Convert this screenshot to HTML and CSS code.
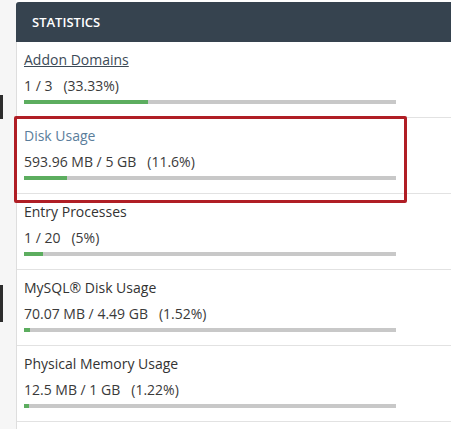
FILE: index.html
```html
<!DOCTYPE html>
<html>
<head>
<meta charset="utf-8">
<link rel="stylesheet" href="styles.css">
</head>
<body>
<div class="page">
  <div class="gutter">
    <span class="mark mark-a"></span>
    <span class="mark mark-b"></span>
  </div>
  <div class="panel">
    <div class="panel-head">STATISTICS</div>
    <div class="stat">
      <a class="stat-title link" href="#">Addon Domains</a>
      <div class="stat-value"><span>1 / 3</span><span class="pct">(33.33%)</span></div>
      <div class="bar"><div class="fill" style="width:33.33%"></div></div>
    </div>
    <div class="stat highlighted">
      <div class="stat-title blue">Disk Usage</div>
      <div class="stat-value"><span>593.96 MB / 5 GB</span><span class="pct">(11.6%)</span></div>
      <div class="bar"><div class="fill" style="width:11.6%"></div></div>
    </div>
    <div class="stat">
      <div class="stat-title">Entry Processes</div>
      <div class="stat-value"><span>1 / 20</span><span class="pct">(5%)</span></div>
      <div class="bar"><div class="fill" style="width:5%"></div></div>
    </div>
    <div class="stat">
      <div class="stat-title">MySQL® Disk Usage</div>
      <div class="stat-value"><span>70.07 MB / 4.49 GB</span><span class="pct">(1.52%)</span></div>
      <div class="bar"><div class="fill" style="width:1.52%"></div></div>
    </div>
    <div class="stat">
      <div class="stat-title">Physical Memory Usage</div>
      <div class="stat-value"><span>12.5 MB / 1 GB</span><span class="pct">(1.22%)</span></div>
      <div class="bar"><div class="fill" style="width:1.22%"></div></div>
    </div>
  </div>
</div>
</body>
</html>
```

FILE: styles.css
```css
html, body {
  margin: 0;
  padding: 0;
  background: #ffffff;
  font-family: "Open Sans", "Liberation Sans", sans-serif;
}

.page {
  display: flex;
  height: 429px;
  overflow: hidden;
  padding-top: 2px;
  box-sizing: border-box;
}

.gutter {
  width: 16px;
  flex: none;
  background: #f6f6f6;
  display: flex;
  flex-direction: column;
  margin-top: -2px;
}

.mark {
  display: block;
  width: 3px;
  background: #2d2d2d;
}

.mark-a {
  margin-top: 95px;
  height: 24px;
}

.mark-b {
  margin-top: 166px;
  height: 37px;
}

.panel {
  flex: 1;
  border-left: 1px solid #dedede;
  background: #ffffff;
  border-top-left-radius: 3px;
}

.panel-head {
  height: 40px;
  margin-left: -1px;
  background: #36434f;
  color: #ffffff;
  font-size: 13px;
  font-weight: 600;
  line-height: 40px;
  padding-left: 16px;
  border-top-left-radius: 3px;
}

.stat {
  padding: 8px 0 13px 7px;
  height: 54px;
  border-bottom: 1px solid #e2e2e2;
  position: relative;
}

.stat-title {
  display: block;
  font-size: 14px;
  line-height: 20px;
  color: #333333;
}

.stat-title.link {
  color: #3c4a57;
  text-decoration: underline;
}

.stat-title.blue {
  color: #5a7d9b;
}

.stat-value {
  margin-top: 6px;
  font-size: 14px;
  line-height: 20px;
  color: #3a3a3a;
  display: flex;
  gap: 11px;
}

.bar {
  margin-top: 4px;
  width: 372px;
  height: 4px;
  background: #c8c8c8;
}

.fill {
  height: 100%;
  background: #5cad5f;
}

.highlighted::after {
  content: "";
  position: absolute;
  left: -3px;
  top: -2px;
  width: 393px;
  height: 87px;
  box-sizing: border-box;
  border: 3px solid #b01e25;
  border-radius: 2px;
}
```
